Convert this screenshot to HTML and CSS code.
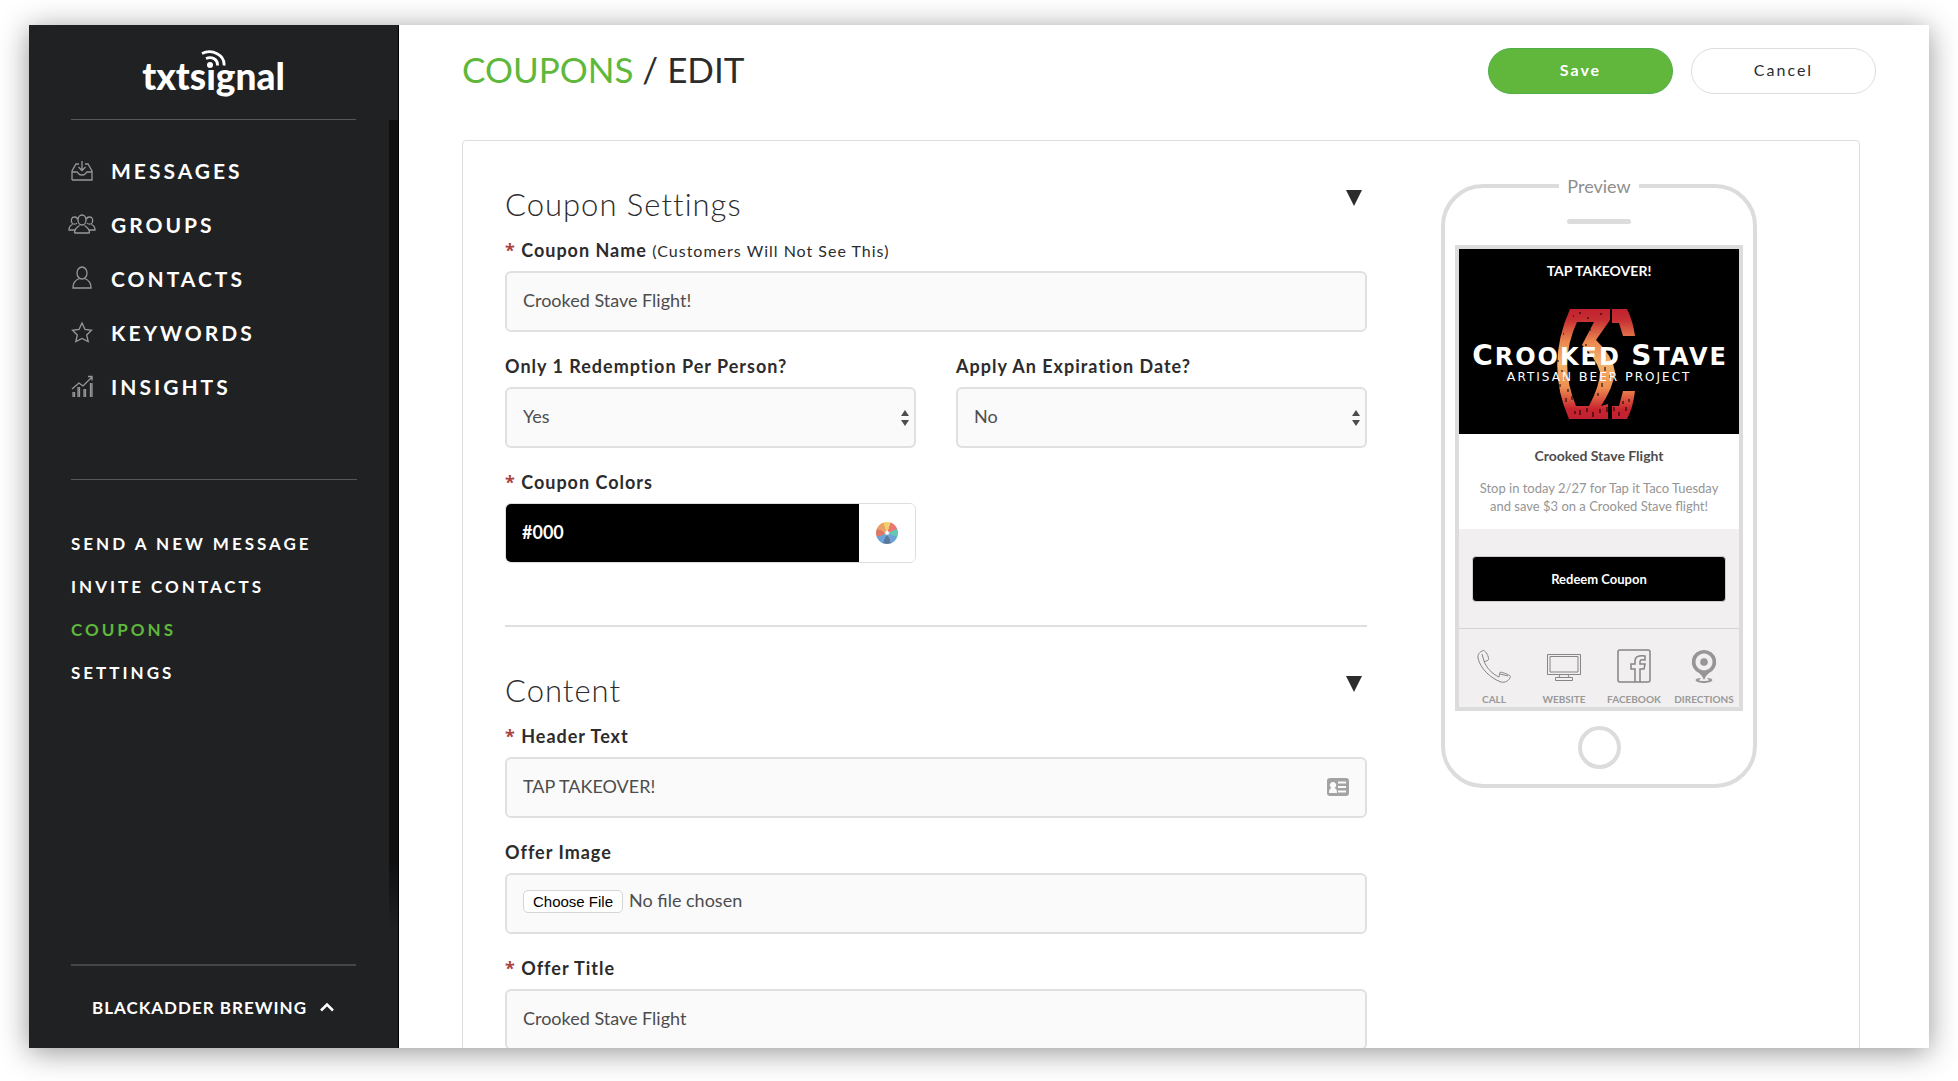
FILE: index.html
```html
<!DOCTYPE html>
<html lang="en">
<head>
    <meta charset="UTF-8">
    <meta name="viewport" content="width=device-width, initial-scale=1.0">
    <title>Coupons / Edit - txtsignal</title>
    <link rel="stylesheet" href="styles.css">
</head>
<body>
    <div class="window">
        <aside class="sidebar">
            <a href="#" class="logo">
                <svg class="logo-waves" viewBox="0 0 26 18" width="26" height="18" aria-hidden="true">
                    <circle cx="9" cy="15" r="3" fill="#fff"/>
                    <path d="M5 8.500C11 6 17 9.500 16.500 15.500M1 3.500C11 -1.500 24 5 23 15.500" fill="none" stroke="#fff" stroke-width="2.800"/>
                </svg>
                <span>txtsıgnal</span>
            </a>

            <div class="menu">
                <nav class="main-nav">
                    <a href="#">
                        <svg viewBox="0 0 28 24"><path d="M4 22V13L8 6h3M17 6h3l4 7v9H4M4 14h5c1 0 1 3 5 3s4-3 5-3h5M14 3v9M10.500 9l3.500 3.500L17.500 9"/></svg>
                        Messages
                    </a>
                    <a href="#">
                        <svg viewBox="0 0 28 24"><ellipse cx="14" cy="8" rx="4" ry="5"/><path d="M6.500 21c0-4 2.500-6 5-7.500M16.500 13.500c2.500 1.500 5 3.500 5 7.500M6.500 21h15M9 11c-1 1.500-4 1.500-5 0-1.500-3-.5-6 2.500-6 2 0 3 1 3 2.500M19 11c1 1.500 4 1.500 5 0 1.500-3 .5-6-2.500-6-2 0-3 1-3 2.500M4.500 12.500C2 13.500 1 15 1 18h6M23.500 12.500c2.500 1 3.500 2.500 3.500 5.500h-6"/></svg>
                        Groups
                    </a>
                    <a href="#">
                        <svg viewBox="0 0 28 24"><ellipse cx="14" cy="7" rx="5" ry="6"/><path d="M11.500 12.500C7 14 5 17 5 22h18c0-5-2-8-6.500-9.500"/></svg>
                        Contacts
                    </a>
                    <a href="#">
                        <svg viewBox="0 0 28 24"><path d="M14 3l3 6.500 6.500.8-4.800 4.700 1.500 6.500-6.200-3-6.200 3L9.300 15 4.500 10.300l6.500-.8Z"/></svg>
                        Keywords
                    </a>
                    <a href="#">
                        <svg viewBox="0 0 28 24"><path d="M4 15l7-6 4 3 9-9M20 2.500h4v4M5 23v-5M6.500 23v-5M10 23V13M11.500 23V13M16 23v-8M17.500 23v-8M22.500 23V9M24 23V9"/></svg>
                        Insights
                    </a>
                </nav>
                <nav class="sub-nav">
                    <a href="#">Send a new message</a>
                    <a href="#">Invite contacts</a>
                    <a href="#" class="active">Coupons</a>
                    <a href="#">Settings</a>
                </nav>
            </div>

            <button type="button" class="account">
                Blackadder Brewing
                <svg viewBox="0 0 16 10" width="16" height="10"><path d="M2 8.500l6-6 6 6" fill="none" stroke="#fff" stroke-width="2.500"/></svg>
            </button>
        </aside>

        <main class="main">
            <header class="page-header">
                <h1><a href="#">COUPONS</a> / EDIT</h1>
                <div class="actions">
                    <button type="submit" form="coupon-form" class="btn btn-save">Save</button>
                    <button type="button" class="btn">Cancel</button>
                </div>
            </header>

            <div class="card">
                <form class="form" id="coupon-form">
                    <section class="section">
                        <div class="section-head">
                            <h2>Coupon Settings</h2>
                            <button type="button" class="toggle" aria-label="Toggle coupon settings"></button>
                        </div>
                        <div class="field">
                            <label for="coupon_name"><span class="required">*</span> Coupon Name <small>(Customers Will Not See This)</small></label>
                            <input type="text" id="coupon_name" class="control" value="Crooked Stave Flight!">
                        </div>
                        <div class="row">
                            <div class="field">
                                <label for="redemption">Only 1 Redemption Per Person?</label>
                                <select id="redemption" class="control">
                                    <option>Yes</option>
                                    <option>No</option>
                                </select>
                            </div>
                            <div class="field">
                                <label for="expiration">Apply An Expiration Date?</label>
                                <select id="expiration" class="control">
                                    <option>No</option>
                                    <option>Yes</option>
                                </select>
                            </div>
                            <div class="field">
                                <label for="color"><span class="required">*</span> Coupon Colors</label>
                                <div class="color-picker">
                                    <input type="text" id="color" value="#000">
                                    <button type="button" aria-label="Pick a color"><span class="wheel"></span></button>
                                </div>
                            </div>
                        </div>
                    </section>

                    <section class="section">
                        <div class="section-head">
                            <h2>Content</h2>
                            <button type="button" class="toggle" aria-label="Toggle content"></button>
                        </div>
                        <div class="field">
                            <label for="header_text"><span class="required">*</span> Header Text</label>
                            <div class="with-icon">
                                <input type="text" id="header_text" class="control" value="TAP TAKEOVER!">
                                <svg class="id-card" viewBox="0 0 22 18" width="22" height="18"><rect width="22" height="18" rx="3" fill="#a3a3a3"/><path d="M11 3.500h8v2h-8zM11 8h8v2h-8zM11 12.500h8v2h-8zM2 15c0-3.500 1-4.500 2.500-5a3.200 3.200 0 1 1 3 0c1.500.5 2.500 1.500 2.500 5Z" fill="#fafafa"/></svg>
                            </div>
                        </div>
                        <div class="field">
                            <label for="offer_image">Offer Image</label>
                            <input type="file" id="offer_image" class="control">
                        </div>
                        <div class="field">
                            <label for="offer_title"><span class="required">*</span> Offer Title</label>
                            <input type="text" id="offer_title" class="control" value="Crooked Stave Flight">
                        </div>
                    </section>
                </form>

                <div class="preview">
                    <div class="phone">
                        <span class="phone-label">Preview</span>
                        <div class="speaker"></div>
                        <div class="screen">
                            <div class="hero">
                                <strong>TAP TAKEOVER!</strong>
                                <svg viewBox="0 0 280 125" role="img" aria-label="Crooked Stave Artisan Beer Project">
                                    <defs>
                                        <linearGradient id="ember" x1="0" y1="9" x2="0" y2="118" gradientUnits="userSpaceOnUse">
                                            <stop offset="0" stop-color="#c1222f"/>
                                            <stop offset=".1" stop-color="#c62f32"/>
                                            <stop offset=".3" stop-color="#ec8850"/>
                                            <stop offset=".5" stop-color="#f5b56c"/>
                                            <stop offset=".72" stop-color="#ee8e50"/>
                                            <stop offset=".92" stop-color="#c8232f"/>
                                            <stop offset="1" stop-color="#c1222f"/>
                                        </linearGradient>
                                    </defs>
                                    <path fill="url(#ember)" fill-rule="evenodd" d="M111 9H151V20L137 40Q154 56 156 72Q154 88 142 106L149 104V119H110Q86 65 111 9ZM118 22Q99 63 117 106H130Q141 85 141 72Q137 58 123 45L135 22ZM153 9H168Q174 21 176 36H164L160 23H153ZM164 91H176Q174 108 168 119H153V106H160Z"/>
                                    <g class="grit"><path d="M114 16h1M121 12v2M128 18h2M142 13v2M104 34h1M110 47h2M99 60v2M105 77v3M101 84v3M109 89v3M113 96v4M121 110v5M128 108v4M134 112v5M141 109v4M148 107v5M155 107v4M160 112v4M167 107v4M146 67v4M151 75v3M143 83v4M139 93v3M107 98v4M116 111v3M164 101v3M170 99v3M131 30h1M126 45h2M103 70v2"/></g>
                                    <text x="141" y="65" class="brand"><tspan class="cap">C</tspan>ROOKED <tspan class="cap">S</tspan>TAVE</text>
                                    <text x="140" y="81" class="brand-sub"><tspan class="cap">A</tspan>RTISAN <tspan class="cap">B</tspan>EER <tspan class="cap">P</tspan>ROJECT</text>
                                </svg>
                            </div>
                            <div class="offer">
                                <h3>Crooked Stave Flight</h3>
                                <p>Stop in today 2/27 for Tap it Taco Tuesday and save $3 on a Crooked Stave flight!</p>
                            </div>
                            <div class="redeem">
                                <button type="button">Redeem Coupon</button>
                            </div>
                            <nav class="links">
                                <a href="#">
                                    <svg viewBox="0 0 34 34"><path d="M6.500 1.500C2 3 .5 6 1 9c2 10 12 20 23 24 4 1 8-1 9.500-5.500-1-2-8-4-10-4.500-1 1-1 3-1.500 5C15 25 10 19 7 12.500c2 0 4-1 4.500-2C12 8 9 2 6.500 1.500ZM5 5l2 7M23 25l8 2"/></svg>
                                    Call
                                </a>
                                <a href="#">
                                    <svg viewBox="0 0 34 34"><path d="M.5 5.500h33v20H.5ZM3 7.500v15.500h28V7.500ZM13 25.500l-1 3h10l-1-3M8.500 28.500h17v3h-17Z"/></svg>
                                    Website
                                </a>
                                <a href="#">
                                    <svg viewBox="0 0 34 34" class="bold"><rect x="1" y="1" width="32" height="32" rx="2"/><path d="M18 33V20h-4v-5h4v-3c0-4 3-6 10-5v4c-4-.5-5 0-5 2v2h5l-1 5h-4v13"/></svg>
                                    Facebook
                                </a>
                                <a href="#">
                                    <svg viewBox="0 0 34 34" class="solid"><path fill-rule="evenodd" d="M17 1a12 12 0 0 1 5 23Q19 26 17 31Q15 26 12 24A12 12 0 0 1 17 1ZM17 4.500a8.500 8.500 0 1 0 .01 0Z"/><circle cx="17" cy="13" r="3.800"/><path d="M13 29c-8 1-4 5 4 5s12-4 4-5l-1 1c4 1 2 2-3 2s-7-1-3-2Z"/></svg>
                                    Directions
                                </a>
                            </nav>
                        </div>
                        <div class="home"></div>
                    </div>
                </div>
            </div>
        </main>
    </div>
</body>
</html>
```
FILE: styles.css
```css
* {
    box-sizing: border-box;
}

body {
    margin: 0;
    padding: 25px 29px 33px;
    height: 100vh;
    background: #fff;
    color: #2c2c2d;
    font-family: Lato, "Liberation Sans", sans-serif;
    overflow: hidden;
}

a {
    color: inherit;
    text-decoration: none;
}

button, input, select {
    font-family: inherit;
}

.window {
    display: flex;
    height: 100%;
    box-shadow: 0 4px 28px rgba(0, 0, 0, 0.42);
}

/* Sidebar */
.sidebar {
    display: flex;
    flex-direction: column;
    flex: 0 0 370px;
    background: #202123;
    border-right: 1px solid #000;
    color: #fff;
}

.logo {
    display: flex;
    flex-direction: column;
    align-items: center;
    height: 95px;
    margin: 0 42px;
    padding-top: 25px;
    border-bottom: 1px solid #56575a;
    font-size: 37px;
    font-weight: 900;
    line-height: 36px;
}

.logo-waves {
    flex: none;
    margin-bottom: -10px;
}

.menu {
    flex: 1;
    padding: 23px 41px 0 42px;
    background: linear-gradient(#0f0f10 0, #0f0f10 740px, #202123 810px) right top / 9px 100% no-repeat;
}

.main-nav {
    padding-bottom: 66px;
    border-bottom: 1px solid #56575a;
}

.main-nav a {
    display: flex;
    align-items: center;
    gap: 15px;
    height: 54px;
    margin-left: -3px;
    font-size: 21px;
    font-weight: bold;
    letter-spacing: 3px;
    text-transform: uppercase;
}

.main-nav svg {
    width: 28px;
    height: 24px;
    fill: none;
    stroke: #97989a;
    stroke-width: 1.3;
}

.sub-nav {
    display: flex;
    flex-direction: column;
    padding-top: 42px;
}

.sub-nav a {
    font-size: 17px;
    font-weight: bold;
    line-height: 43px;
    letter-spacing: 3px;
    text-transform: uppercase;
}

.sub-nav .active {
    color: #5fb83b;
}

.account {
    display: flex;
    justify-content: center;
    align-items: center;
    gap: 12px;
    height: 84px;
    margin: 0 42px;
    padding: 0;
    border: 0;
    border-top: 2px solid #434547;
    background: none;
    color: #fff;
    font-size: 17px;
    font-weight: bold;
    letter-spacing: 1px;
    text-transform: uppercase;
}

/* Main area */
.main {
    flex: 1;
    overflow-y: auto;
    scrollbar-width: none;
    background: #fff;
}

.page-header {
    display: flex;
    justify-content: space-between;
    align-items: center;
    height: 91px;
    padding: 0 53px 0 63px;
}

h1, h2, h3, p {
    margin: 0;
}

h1 {
    padding-bottom: 3px;
    font-size: 35px;
    font-weight: normal;
}

h1 a {
    color: #5fb83b;
}

.actions {
    display: flex;
    gap: 18px;
}

.btn {
    width: 185px;
    height: 46px;
    padding-bottom: 3px;
    border: 1px solid #ddd;
    border-radius: 23px;
    background: #fff;
    color: #2c2c2d;
    font-size: 16px;
    letter-spacing: 2px;
}

.btn-save {
    border-color: #4fae48;
    background: #61b73c;
    color: #fff;
    font-weight: bold;
}

.card {
    display: flex;
    gap: 74px;
    margin: 24px 69px 0 63px;
    padding: 43px 102px 40px 42px;
    border: 1px solid #ddd;
    border-radius: 4px;
}

/* Form */
.form {
    flex: 1;
}

.section + .section {
    margin-top: 62px;
    padding-top: 43px;
    border-top: 2px solid #e0e0e0;
}

.section-head {
    display: flex;
    justify-content: space-between;
    height: 57px;
    padding-right: 5px;
}

h2 {
    font-size: 31px;
    font-weight: 300;
    line-height: 40px;
    letter-spacing: 1px;
}

.toggle {
    width: 16px;
    height: 16px;
    margin-top: 6px;
    padding: 0;
    border: 0;
    background: #2c2c2d;
    clip-path: polygon(0 0, 100% 0, 50% 100%);
}

.field {
    margin-bottom: 25px;
}

.field:last-child {
    margin-bottom: 0;
}

.row {
    display: grid;
    grid-template-columns: 1fr 1fr;
    column-gap: 40px;
}

label {
    display: block;
    height: 30px;
    font-size: 18px;
    font-weight: bold;
    line-height: 18px;
    letter-spacing: 1px;
}

label small {
    font-size: 16px;
    font-weight: normal;
}

.required {
    color: #a94442;
    font-family: "Open Sans", sans-serif;
}

.control {
    display: block;
    width: 100%;
    height: 61px;
    padding: 0 16px 4px;
    border: 2px solid #e0e0e0;
    border-radius: 6px;
    background: #fafafa;
    color: #4d4d4d;
    font-size: 18px;
}

select.control {
    appearance: none;
    background: #fafafa url("data:image/svg+xml,%3Csvg xmlns='http://www.w3.org/2000/svg' width='10' height='18'%3E%3Cpath d='M1 7l4-6 4 6zM1 11h8l-4 6z' fill='%234d4d4d'/%3E%3C/svg%3E") right 4px center no-repeat;
}

input[type="file"] {
    padding-top: 14px;
}

input[type="file"]::file-selector-button {
    height: 23px;
    margin-right: 6px;
    padding: 0 9px;
    border: 1px solid #d5d5d5;
    border-radius: 5px;
    background: #fff;
    color: #000;
    font-family: "Liberation Sans", sans-serif;
    font-size: 15px;
}

.with-icon {
    position: relative;
}

.id-card {
    position: absolute;
    top: 21px;
    right: 18px;
}

.color-picker {
    display: flex;
    height: 60px;
    border: 1px solid #ddd;
    border-radius: 6px;
    overflow: hidden;
}

.color-picker input {
    flex: 1;
    min-width: 0;
    padding: 0 16px 2px;
    border: 0;
    background: #000;
    color: #fff;
    font-size: 18px;
    font-weight: bold;
}

.color-picker button {
    display: flex;
    justify-content: center;
    align-items: center;
    width: 56px;
    padding: 0;
    border: 0;
    background: #fff;
}

.wheel {
    width: 22px;
    height: 22px;
    border-radius: 50%;
    background:
        radial-gradient(#fff 1px, transparent 3px),
        conic-gradient(#f2d06b 0 20deg, #eb7571 20deg 68deg, #62c8b3 68deg 112deg, #6da2d6 112deg 158deg, #58799b 158deg 202deg, #6da2d6 202deg 248deg, #dc7963 248deg 292deg, #e9a066 292deg 340deg, #f2d06b 340deg);
}

/* Phone preview */
.phone {
    display: flex;
    flex-direction: column;
    align-items: center;
    width: 316px;
    height: 604px;
    border: 4px solid #dcdcdc;
    border-radius: 42px;
}

.phone-label {
    margin-top: -12px;
    padding: 0 8px;
    background: #fff;
    color: #8e8e8e;
    font-size: 18px;
    line-height: 20px;
}

.speaker {
    width: 64px;
    height: 5px;
    margin: 23px 0 21px;
    border-radius: 3px;
    background: #dcdcdc;
}

.screen {
    width: 288px;
    border: 4px solid #dcdcdc;
    background: #f1eff0;
}

.hero {
    display: flex;
    flex-direction: column;
    height: 185px;
    padding-top: 14px;
    background: #000;
    color: #fff;
    font-size: 14px;
    line-height: 16px;
    text-align: center;
}

.hero svg {
    width: 100%;
    margin-top: 21px;
}

.brand, .brand-sub {
    fill: #fff;
    font-family: "DejaVu Sans", sans-serif;
    text-anchor: middle;
}

.brand {
    font-size: 24px;
    font-weight: bold;
    letter-spacing: 2px;
}

.brand .cap {
    font-size: 28px;
}

.brand-sub {
    font-size: 12px;
    letter-spacing: 2px;
}

.brand-sub .cap {
    font-size: 13px;
}

.grit {
    stroke: #000;
    stroke-width: 1;
}

.offer {
    height: 95px;
    padding: 13px 12px 0;
    background: #fff;
    text-align: center;
}

.offer h3 {
    margin-bottom: 14px;
    color: #4d4d4d;
    font-size: 14px;
    line-height: 18px;
}

.offer p {
    color: #959595;
    font-size: 13px;
    line-height: 18px;
}

.redeem {
    padding: 27px 13px 26px;
    border-bottom: 1px solid #d3d3d3;
}

.redeem button {
    width: 100%;
    height: 46px;
    border: 1px solid #ccc;
    border-radius: 4px;
    background: #000;
    color: #fff;
    font-size: 13px;
    font-weight: bold;
}

.links {
    display: grid;
    grid-template-columns: repeat(4, 1fr);
    padding: 20px 0 2px;
}

.links a {
    display: flex;
    flex-direction: column;
    align-items: center;
    gap: 10px;
    color: #999;
    font-size: 10px;
    font-weight: bold;
    line-height: 12px;
    text-transform: uppercase;
}

.links svg {
    width: 34px;
    height: 34px;
    fill: none;
    stroke: #858585;
}

.links .bold {
    stroke-width: 1.500;
}

.links .solid {
    fill: #969696;
    stroke: none;
}

.home {
    width: 43px;
    height: 43px;
    margin-top: 15px;
    border: 4px solid #dcdcdc;
    border-radius: 50%;
}
```
